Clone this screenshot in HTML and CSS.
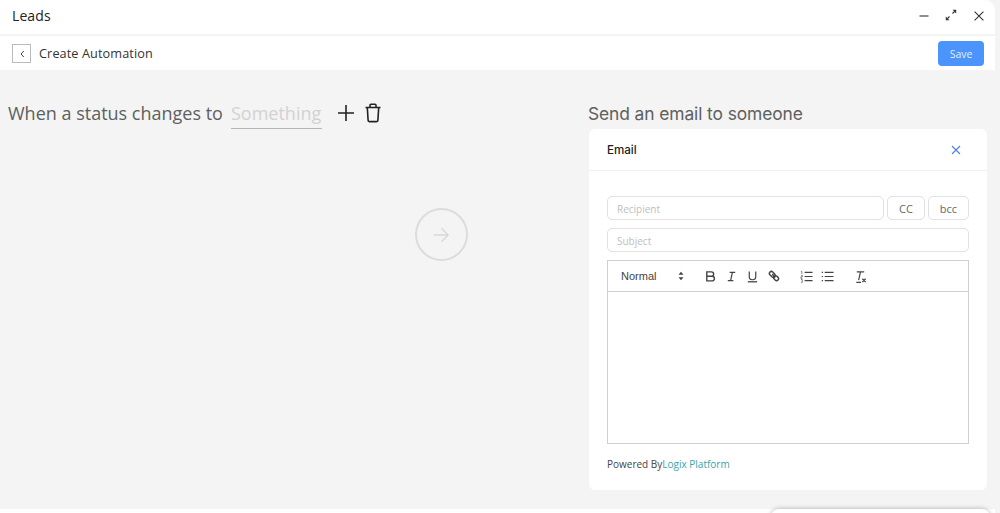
FILE: index.html
```html
<!DOCTYPE html>
<html lang="en">
<head>
<meta charset="utf-8">
<title>Create Automation</title>
<link rel="stylesheet" href="styles.css">
</head>
<body>
<div class="app">
  <header class="titlebar">
    <span class="title">Leads</span>
    <div class="win-actions">
      <svg class="win-icon minus" viewBox="0 0 10 12"><path d="M.5 6h9" /></svg>
      <svg class="win-icon expand" viewBox="0 0 12 12"><path d="M2.500 9.500l2-2M7.500 4.500l2-2" /><path class="fill" d="M.8 11.200V7.600l3.600 3.600zM11.200.8v3.600L7.600.8z"/></svg>
      <svg class="win-icon close" viewBox="0 0 10 10"><path d="M.6.6l8.800 8.800M9.400.6L.6 9.400" /></svg>
    </div>
  </header>
  <div class="subbar">
    <button class="back" aria-label="Back"><svg viewBox="0 0 8 10"><path d="M5.800 2L3 5l2.800 3"/></svg></button>
    <span class="subtitle">Create Automation</span>
    <button class="save">Save</button>
  </div>
  <main class="content">
    <section class="trigger">
      <div class="when">
        <span class="when-text">When a status changes to</span>
        <span class="something">Something</span>
        <svg class="tool plus" viewBox="0 0 18 18"><path d="M9 1v16M1 9h16"/></svg>
        <svg class="tool trash" viewBox="0 0 18 20"><path d="M1.500 4.500h15M6 4.500V2.200c0-.5.4-.9.9-.9h4.200c.5 0 .9.4.9.9v2.300M3.300 4.500l.8 12.800c0 .7.6 1.300 1.300 1.300h7.200c.7 0 1.300-.6 1.300-1.300l.8-12.800"/></svg>
      </div>
      <div class="arrow-wrap">
        <div class="arrow-circle">
          <svg viewBox="0 0 18 18"><path d="M1 9h16M9.500 1.500L17 9l-7.500 7.500"/></svg>
        </div>
      </div>
    </section>
    <section class="action">
      <h2 class="action-title">Send an email to someone</h2>
      <div class="card">
        <div class="card-head">
          <span class="card-title">Email</span>
          <svg class="card-close" viewBox="0 0 10 10"><path d="M1 1l8 8M9 1l-8 8"/></svg>
        </div>
        <div class="card-body">
          <div class="row">
            <div class="field grow">Recipient</div>
            <button class="chip cc">CC</button>
            <button class="chip bcc">bcc</button>
          </div>
          <div class="field">Subject</div>
          <div class="editor">
            <div class="toolbar">
              <span class="select">Normal
                <svg class="caret" viewBox="0 0 6 10"><path d="M3 .8L5.500 3.800H.5zM3 9.200L.5 6.200h5z"/></svg>
              </span>
              <div class="tb-group">
                <svg class="tb bold" viewBox="0 0 14 14"><path d="M3 2h5a2.300 2.300 0 010 4.800H3zM3 6.800h5.800a2.400 2.400 0 010 4.900H3z"/></svg>
                <svg class="tb" viewBox="0 0 14 14"><path d="M5 2.500h6M3 11.500h6M8 2.500l-2 9"/></svg>
                <svg class="tb" viewBox="0 0 14 14"><path d="M3.500 1.500v5.500a3.500 3.500 0 007 0V1.500"/><path class="thick" d="M2 12.700h10"/></svg>
                <svg class="tb link" viewBox="0 0 14 14"><path d="M5.700 4.300L8.700 8.300M3.200 2.200a2.200 2.200 0 013 0l2 2a2.200 2.200 0 010 3 2.200 2.200 0 01-3 0l-2-2a2.200 2.200 0 010-3zM7.800 6.800a2.200 2.200 0 013 0l1 1a2.200 2.200 0 010 3 2.200 2.200 0 01-3 0l-1-1a2.200 2.200 0 010-3z"/></svg>
              </div>
              <div class="tb-group lists">
                <svg class="tb" viewBox="0 0 14 14"><path d="M5 2.500h8.500M5 7h8.500M5 11.500h8.500"/><path class="thin" d="M1 1.500h1v3M1 6h1.500v1.500H1V9h1.500M1 10.300h1.500v3H1"/></svg>
                <svg class="tb" viewBox="0 0 14 14"><path d="M4 2.500h9.500M4 7h9.500M4 11.500h9.500M.8 2.500h1.400M.8 7h1.400M.8 11.500h1.400"/></svg>
              </div>
              <svg class="tb clear" viewBox="0 0 14 14"><path d="M3 2h8M7 2L5 11"/><path class="thick" d="M9 9.500l3.500 3.500M12.500 9.500L9 13M2.500 13.300h5"/></svg>
            </div>
            <div class="editor-area"></div>
          </div>
          <p class="powered">Powered By<a class="brand">Logix Platform</a></p>
        </div>
      </div>
    </section>
  </main>
  <div class="footer"></div>
</div>
<div class="chat-tab"></div>
</body>
</html>
```
FILE: styles.css
```css
* { box-sizing: border-box; }
html, body { margin: 0; height: 100%; }
body {
  background: #f4f4f4;
  font-family: "Open Sans", "Noto Sans", sans-serif;
  overflow: hidden;
  position: relative;
}
.app {
  width: 995px;
  height: 513px;
  display: flex;
  flex-direction: column;
}
.titlebar {
  height: 34px;
  background: #fff;
  border-top-right-radius: 10px;
  display: flex;
  align-items: center;
  justify-content: space-between;
  padding: 0 11px 3px 12px;
  flex: none;
}
.title { font-size: 14px; color: #222; letter-spacing: .1px; }
.win-actions { display: flex; align-items: center; }
.win-icon { fill: none; stroke: #333; stroke-width: 1.100; flex: none; }
.win-icon .fill { fill: #333; stroke: none; }
.minus { width: 10px; height: 12px; }
.expand { width: 12px; height: 12px; margin-left: 16px; margin-top: -2px; }
.close { width: 10px; height: 10px; margin-left: 17px; }
.subbar {
  margin-top: 2px;
  height: 34px;
  background: #fff;
  display: flex;
  align-items: center;
  padding: 0 11px 0 12px;
  flex: none;
}
.back {
  width: 19px; height: 19px;
  padding: 0;
  background: #fff;
  border: 1px solid #bbb;
  display: flex; align-items: center; justify-content: center;
  margin-top: 1px;
}
.back svg { width: 8px; height: 10px; fill: none; stroke: #444; stroke-width: 1; }
.subtitle { margin-left: 8px; font-size: 12.700px; color: #333; letter-spacing: .1px; }
.save {
  margin-left: auto;
  width: 46px; height: 25px;
  background: #4a94fb;
  border: 0; border-radius: 4px;
  color: #e3eefe;
  font: 10.500px "Open Sans", sans-serif;
  margin-top: 1px;
}
.content {
  flex: 1;
  display: flex;
  min-height: 0;
}
.trigger {
  width: 589px;
  flex: none;
  padding: 29px 0 0 8px;
}
.when { display: flex; align-items: center; height: 28px; }
.when-text { font-size: 18px; color: #5f5f5f; }
.something {
  margin-left: 8px;
  width: 91px;
  font-size: 18px;
  color: #d2d2d2;
  border-bottom: 1px solid #b5b5b5;
  line-height: 29px;
  margin-top: 2px;
}
.tool { fill: none; stroke: #222; stroke-width: 1.600; flex: none; }
.plus { width: 18px; height: 18px; margin-left: 15px; }
.trash { width: 18px; height: 20px; margin-left: 9px; }
.arrow-wrap { padding: 81px 0 0 407px; }
.arrow-circle {
  width: 53px; height: 53px;
  border-radius: 50%;
  border: 2px solid #dcdcdc;
  display: flex; align-items: center; justify-content: center;
}
.arrow-circle svg { width: 16px; height: 16px; fill: none; stroke: #d8d8d8; stroke-width: 1.500; margin-left: -2px; }
.action { width: 398px; flex: none; padding-top: 30px; }
.action-title {
  margin: 0;
  font: 400 17.400px/28px Inter, sans-serif;
  color: #606060;
  letter-spacing: -.1px;
  height: 29px;
  margin-left: -1px;
}
.card {
  background: #fff;
  border-radius: 6px;
  height: 361px;
  display: flex;
  flex-direction: column;
}
.card-head {
  height: 42px;
  border-bottom: 1px solid #f0f0f0;
  display: flex;
  align-items: center;
  justify-content: space-between;
  padding: 0 26px 0 18px;
  flex: none;
}
.card-title { font: 500 11.600px Inter, sans-serif; color: #222; }
.card-close { width: 10px; height: 10px; fill: none; stroke: #4a80e8; stroke-width: 1.100; }
.card-body { padding: 25px 18px 0; display: flex; flex-direction: column; }
.row { display: flex; gap: 3px; margin-bottom: 8px; }
.field {
  height: 24px;
  border: 1px solid #e2e2e2;
  border-radius: 5px;
  font-size: 10px;
  color: #c0c0c0;
  display: flex;
  align-items: center;
  padding: 1px 9px 0;
}
.grow { flex: 1; }
.chip {
  height: 24px;
  background: #fff;
  border: 1px solid #e2e2e2;
  border-radius: 5px;
  font: 11px "Open Sans", sans-serif;
  color: #666;
  padding: 0;
}
.cc { width: 38px; }
.bcc { width: 41px; }
.editor {
  margin-top: 8px;
  border: 1px solid #cfcfcf;
  height: 184px;
  display: flex;
  flex-direction: column;
}
.toolbar {
  height: 31px;
  border-bottom: 1px solid #cfcfcf;
  display: flex;
  align-items: center;
  padding-left: 13px;
  flex: none;
}
.select {
  width: 64px;
  font: 11px "Liberation Sans", sans-serif;
  color: #444;
  display: flex;
  align-items: center;
  justify-content: space-between;
}
.caret { width: 6px; height: 10px; fill: #444; margin-right: 1px; }
.tb-group { display: flex; gap: 8px; margin-left: 19px; }
.lists { margin-left: 20px; gap: 8px; }
.tb { width: 13px; height: 13px; fill: none; stroke: #444; stroke-width: 1.300; flex: none; }
.tb.bold { stroke-width: 1.500; }
.tb.link { stroke-width: 1.600; }
.tb .thin { stroke-width: .7; }
.tb .thick { stroke-width: 1.400; }
.clear { margin-left: 20px; }
.editor-area { flex: 1; }
.powered { margin: 13px 0 0; font-size: 10px; color: #444; line-height: 14px; }
.brand { color: #3aa3ab; }
.footer { height: 4px; background: #fff; margin-top: auto; flex: none; }
.chat-tab {
  position: absolute;
  left: 771px; top: 509px;
  width: 219px; height: 10px;
  background: #fff;
  border-radius: 8px 8px 0 0;
  box-shadow: 0 0 5px rgba(0,0,0,.3);
}
```
